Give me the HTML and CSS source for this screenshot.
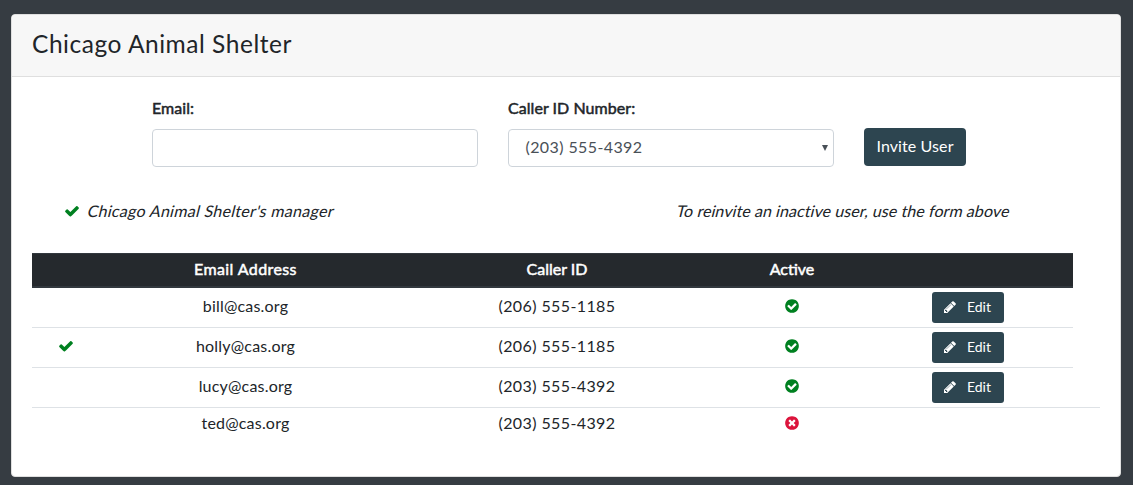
FILE: index.html
```html
<!DOCTYPE html>
<html lang="en">
<head>
<meta charset="utf-8">
<title>Chicago Animal Shelter</title>
<link rel="stylesheet" href="styles.css">
</head>
<body>
<svg class="defs" aria-hidden="true">
  <symbol id="check" viewBox="0 0 1792 1792"><path d="M1671 566q0 40-28 68l-724 724-136 136q-28 28-68 28t-68-28l-136-136-362-362q-28-28-28-68t28-68l136-136q28-28 68-28t68 28l294 295 656-657q28-28 68-28t68 28l136 136q28 28 28 68z"/></symbol>
  <symbol id="check-circle" viewBox="0 0 1792 1792"><path d="M1412 734q0-28-18-46l-91-90q-19-19-45-19t-45 19l-408 407-226-226q-19-19-45-19t-45 19l-91 90q-18 18-18 46 0 27 18 45l362 362q19 19 45 19 27 0 46-19l543-543q18-18 18-45zm252 162q0 209-103 385.500t-279.500 279.500-385.500 103-385.500-103-279.500-279.500-103-385.500 103-385.500 279.500-279.500 385.500-103 385.500 103 279.500 279.500 103 385.500z"/></symbol>
  <symbol id="times-circle" viewBox="0 0 1792 1792"><path d="M1277 1122q0-26-19-45l-181-181 181-181q19-19 19-45 0-27-19-46l-90-90q-19-19-46-19-26 0-45 19l-181 181-181-181q-19-19-45-19-27 0-46 19l-90 90q-19 19-19 46 0 26 19 45l181 181-181 181q-19 19-19 45 0 27 19 46l90 90q19 19 46 19 26 0 45-19l181-181 181 181q19 19 45 19 27 0 46-19l90-90q19-19 19-46zm387-226q0 209-103 385.500t-279.500 279.500-385.500 103-385.500-103-279.500-279.500-103-385.500 103-385.500 279.500-279.500 385.500-103 385.500 103 279.500 279.500 103 385.500z"/></symbol>
  <symbol id="pencil" viewBox="0 0 1792 1792"><path d="M491 1536l91-91-235-235-91 91v107h128v128h107zm523-928q0-22-22-22-10 0-17 7l-542 542q-7 7-7 17 0 22 22 22 10 0 17-7l542-542q7-7 7-17zm-54-192l416 416-832 832h-416v-416zm683 96q0 53-37 90l-166 166-416-416 166-165q36-38 90-38 53 0 91 38l235 234q37 39 37 91z"/></symbol>
</svg>
<main class="card">
  <header class="card-header"><h1 class="title">Chicago Animal Shelter</h1></header>
  <div class="card-body">
    <form class="invite">
      <div class="field">
        <label class="label" for="email">Email:</label>
        <input class="control" id="email" type="text">
      </div>
      <div class="field">
        <label class="label">Caller ID Number:</label>
        <div class="control select"><span class="phone">(203) 555-4392</span><svg class="caret" viewBox="0 0 6 6"><path d="M0 0h6L3 6z"/></svg></div>
      </div>
      <button class="btn btn-invite" type="button">Invite User</button>
    </form>
    <div class="notes">
      <p class="note"><svg class="icon ok"><use href="#check"/></svg><em class="manager">Chicago Animal Shelter's manager</em></p>
      <p class="note"><em class="reinvite">To reinvite an inactive user, use the form above</em></p>
    </div>
    <table class="users">
      <colgroup><col class="c-mark"><col class="c-email"><col class="c-phone"><col class="c-active"><col class="c-edit"><col class="c-end"></colgroup>
      <thead><tr><th></th><th class="h-email">Email Address</th><th>Caller ID</th><th>Active</th><th></th></tr></thead>
      <tbody>
        <tr><td></td><td class="mail">bill@cas.org</td><td class="phone">(206) 555-1185</td><td><svg class="icon ok"><use href="#check-circle"/></svg></td><td class="action"><button class="btn btn-edit" type="button"><svg class="icon-sm"><use href="#pencil"/></svg>Edit</button></td></tr>
        <tr><td><svg class="icon ok"><use href="#check"/></svg></td><td class="mail">holly@cas.org</td><td class="phone">(206) 555-1185</td><td><svg class="icon ok"><use href="#check-circle"/></svg></td><td class="action"><button class="btn btn-edit" type="button"><svg class="icon-sm"><use href="#pencil"/></svg>Edit</button></td></tr>
        <tr class="last-active"><td></td><td class="mail">lucy@cas.org</td><td class="phone">(203) 555-4392</td><td><svg class="icon ok"><use href="#check-circle"/></svg></td><td class="action"><button class="btn btn-edit" type="button"><svg class="icon-sm"><use href="#pencil"/></svg>Edit</button></td></tr>
        <tr class="inactive"><td></td><td class="mail">ted@cas.org</td><td class="phone">(203) 555-4392</td><td><svg class="icon bad"><use href="#times-circle"/></svg></td><td></td><td></td></tr>
      </tbody>
    </table>
  </div>
</main>
</body>
</html>
```
FILE: styles.css
```css
* { box-sizing: border-box; }
body { margin: 0; height: 485px; overflow: hidden; padding: 14px 12px 8px 11px; background: #363c42; color: #212529; font: 16px/24px Lato, "Noto Sans", sans-serif; }
.defs { display: none; }
.card { height: 463px; background: #fff; border: 1px solid #dfdfdf; border-radius: 4px; overflow: hidden; }
.card-header { height: 62px; padding: 14px 20px; background: #f7f7f7; border-bottom: 1px solid #dfdfdf; }
.title { margin: 0; font-size: 24.5px; line-height: 30px; font-weight: 400; letter-spacing: .53px; }
.card-body { padding: 19px 20px; }
.invite { display: flex; gap: 30px; align-items: flex-end; margin-left: 120px; height: 71px; }
.field { display: flex; flex-direction: column; gap: 9px; width: 326px; }
.label { -webkit-text-stroke: .5px currentColor; white-space: nowrap; letter-spacing: .05px; }
.control { display: block; width: 326px; height: 38px; border: 1px solid #ced4da; border-radius: 4px; background: #fff; }
.select { display: flex; align-items: center; justify-content: space-between; padding: 0 5px 0 16.5px; color: #495057; }
.select .phone { padding-bottom: 2px; }
.caret { width: 6px; height: 6px; fill: #495057; }
.btn { border: 0; border-radius: 4px; background: #2d4550; color: #fff; font: inherit; padding: 0; }
.btn-invite { width: 102px; height: 38px; margin-bottom: 1px; padding-bottom: 2px; letter-spacing: .1px; }
.notes { display: flex; justify-content: space-between; margin: 32px 90px 0 32px; height: 24px; }
.note { display: flex; align-items: center; gap: 8px; margin: 0; }
.note em { font-style: normal; transform: skewX(-14deg); white-space: nowrap; }
.manager { letter-spacing: .3px; }
.reinvite { letter-spacing: .07px; }
.icon { display: inline-block; width: 16px; height: 16px; vertical-align: -2px; fill: currentColor; }
.ok { color: #008020; }
.bad { color: #dc143c; }
.users { table-layout: fixed; width: 1068px; margin-top: 30px; border-spacing: 0; text-align: center; }
.c-mark { width: 67px; }
.c-email { width: 293px; }
.c-phone { width: 330px; }
.c-active { width: 140px; }
.c-edit { width: 211px; }
.c-end { width: 27px; }
th { height: 35px; padding: 0 0 3px; background: #25292d; border-top: 1px solid #32383e; border-bottom: 2px solid #32383e; color: #fff; font-weight: 400; -webkit-text-stroke: .5px currentColor; }
.h-email { letter-spacing: .4px; }
td { height: 40px; padding: 0 0 3px; border-bottom: 1px solid #dee2e6; vertical-align: middle; }
.action { padding: 0; }
.last-active td { height: 39px; border-bottom: 0; }
.inactive td { height: 33px; padding-bottom: 2px; border-top: 1px solid #dee2e6; border-bottom: 0; }
.btn-edit { display: flex; align-items: center; justify-content: center; gap: 10px; width: 72px; height: 31px; margin: 0 auto; padding: 0 1px 1px 0; font-size: 14px; border-radius: 3px; }
.icon-sm { width: 14px; height: 14px; fill: #fff; }
.phone { letter-spacing: .4px; }
.mail { letter-spacing: .2px; }
```
